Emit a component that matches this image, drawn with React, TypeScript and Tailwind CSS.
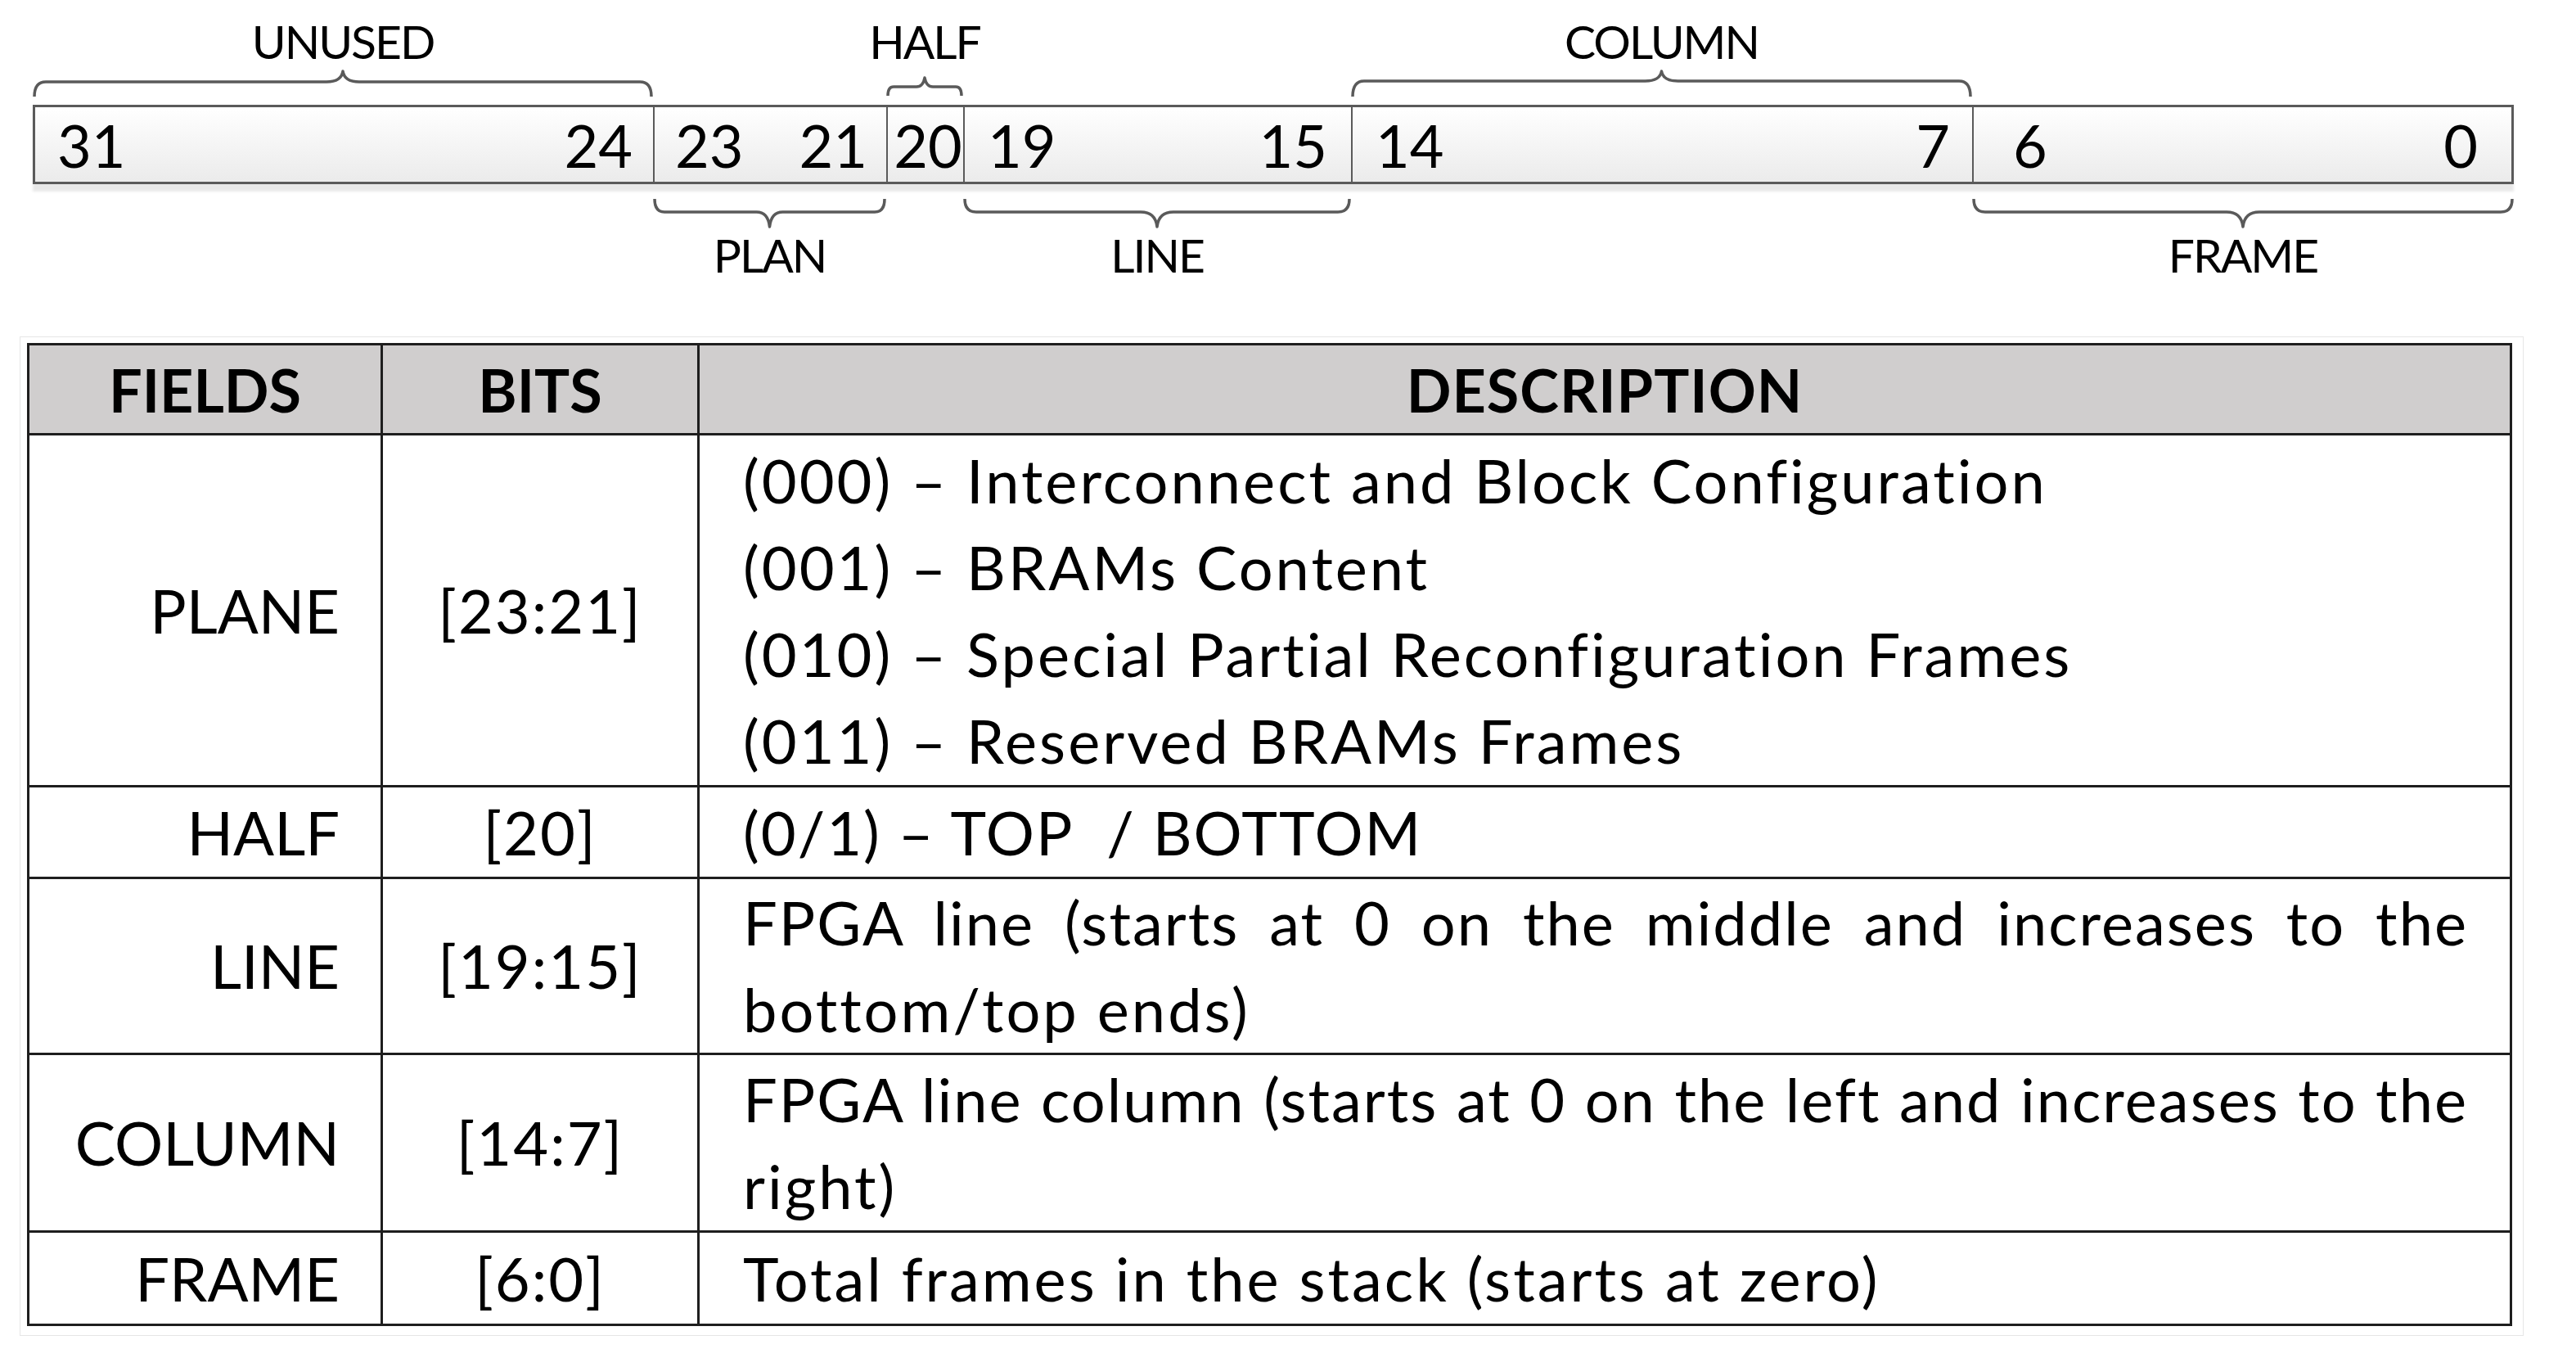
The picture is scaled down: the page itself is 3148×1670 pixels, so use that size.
import React from 'react';

const SEGS = [
  { w: 758, hi: '31', lo: '24', pl: 'pl-[27px]', pr: 'pr-[25px]' },
  { w: 285, hi: '23', lo: '21', pl: 'pl-[25px]', pr: 'pr-[23px]' },
  { w: 94, hi: '20', lo: '', pl: 'pl-[6px]', pr: 'pr-0' },
  { w: 474, hi: '19', lo: '15', pl: 'pl-[28px]', pr: 'pr-[29px]' },
  { w: 759, hi: '14', lo: '7', pl: 'pl-[28px]', pr: 'pr-[27px]' },
  { w: 662, hi: '6', lo: '0', pl: 'pl-[48px]', pr: 'pr-[41px]' },
];

const cols = 'grid grid-cols-[758px_285px_94px_474px_759px_662px]';

type BraceProps = { w: number; h: number; end: number; mid: number; tip: number; r?: number; rt?: number };

const Brace = ({ w, h, end, mid, tip, r = 16, rt = 20 }: BraceProps) => {
  const c = w / 2;
  const d = `M2 ${end} Q2 ${mid} ${r} ${mid} L${c - rt} ${mid} Q${c - 2} ${mid} ${c} ${tip} Q${c + 2} ${mid} ${c + rt} ${mid} L${w - r} ${mid} Q${w - 2} ${mid} ${w - 2} ${end}`;
  return (
    <svg width={w} height={h} viewBox={`0 0 ${w} ${h}`} className="block overflow-visible">
      <path d={d} fill="none" stroke="#5a5a5a" strokeWidth="3.5" strokeLinejoin="round" />
    </svg>
  );
};

const Label = ({ children }: { children?: React.ReactNode }) => (
  <div className="flex justify-center whitespace-nowrap text-[57px] leading-[57px] tracking-[-2px] text-black">{children}</div>
);

const Register = () => {
  return (
    <div className="pl-[40px]">
      <div className={`${cols} h-[85px] pt-[22px]`}>
        <Label>UNUSED</Label>
        <div />
        <Label>HALF</Label>
        <div />
        <Label>COLUMN</Label>
        <div />
      </div>
      <div className={`${cols} h-[35px]`}>
        <Brace w={758} h={35} end={33} mid={15} tip={2} />
        <div />
        <Brace w={94} h={35} end={32} mid={21} tip={10} r={9} rt={10} />
        <div />
        <Brace w={759} h={35} end={33} mid={14} tip={2} />
        <div />
      </div>
      <div className="mt-[8px] flex h-[97px] w-[3032px] border-[3px] border-[#5a5a5a] bg-gradient-to-b from-white to-[#ebebeb] shadow-[0_9px_3px_rgba(0,0,0,0.09)]">
        {SEGS.map((s, i) => (
          <div
            key={i}
            className={`flex h-full items-center text-[72px] leading-none text-black ${i > 0 ? 'border-l-2 border-[#5a5a5a]' : ''} ${s.lo ? 'justify-between' : 'justify-center'} ${s.pl} ${s.pr}`}
            style={{ width: i === 0 ? s.w - 3 : i === SEGS.length - 1 ? s.w - 3 : s.w }}
          >
            <span>{s.hi}</span>
            {s.lo && <span>{s.lo}</span>}
          </div>
        ))}
      </div>
      <div className={`${cols} mt-[15px] h-[40px]`}>
        <div />
        <Brace w={285} h={40} end={3} mid={19} tip={37} r={14} rt={16} />
        <div />
        <Brace w={474} h={40} end={3} mid={19} tip={37} />
        <div />
        <Brace w={662} h={40} end={3} mid={19} tip={37} />
      </div>
      <div className={`${cols} h-[60px] pt-[3px]`}>
        <div />
        <Label>PLAN</Label>
        <div />
        <Label>LINE</Label>
        <div />
        <Label>FRAME</Label>
      </div>
    </div>
  );
};

const c1 = 'flex items-center justify-end border-r-[3px] border-[#1e1e1e] pr-[50px]';
const c2 = 'flex items-center justify-center border-r-[3px] border-[#1e1e1e]';
const bits = `${c2} tracking-[2px]`;
const desc = 'flex min-w-0 flex-col justify-center pl-[53px] pr-[51px] leading-[106px]';
const c3 = `${desc} tracking-[3px]`;
const rowB = 'border-b-[3px]';
const head = 'flex items-center justify-center border-[#1e1e1e] bg-[#d0cece] font-bold text-[72px]';

// one table line stretched edge to edge, like Word's justified paragraph
const Spread = ({ children }: { children: React.ReactNode }) => (
  <div className="whitespace-nowrap text-justify tracking-[2px] [text-align-last:justify]">{children}</div>
);

const FieldsTable = () => {
  return (
    <div className="ml-[24px] mt-[71px] w-[3060px] border border-[#e6e6e6] pb-[11px] pl-[8px] pt-[7px]">
      <div className="grid w-[3037px] grid-cols-[432px_387px_minmax(0,1fr)] grid-rows-[110px_430px_112px_215px_217px_111px] border-[3px] border-[#1e1e1e] text-[74px] leading-none text-black">
        <div className={`${head} border-r-[3px] ${rowB}`}>FIELDS</div>
        <div className={`${head} border-r-[3px] ${rowB}`}>BITS</div>
        <div className={`${head} ${rowB} tracking-[1px]`}>DESCRIPTION</div>

        <div className={`${c1} ${rowB}`}>PLANE</div>
        <div className={`${bits} ${rowB}`}>[23:21]</div>
        <div className={`${c3} border-b-[3px] border-[#1e1e1e]`}>
          <div>(000) – Interconnect and Block Configuration</div>
          <div>(001) – BRAMs Content</div>
          <div>(010) – Special Partial Reconfiguration Frames</div>
          <div>(011) – Reserved BRAMs Frames</div>
        </div>

        <div className={`${c1} ${rowB}`}>HALF</div>
        <div className={`${bits} ${rowB}`}>[20]</div>
        <div className={`${desc} whitespace-pre border-b-[3px] border-[#1e1e1e] tracking-[2px]`}>(0/1) – TOP  / BOTTOM</div>

        <div className={`${c1} ${rowB}`}>LINE</div>
        <div className={`${bits} ${rowB}`}>[19:15]</div>
        <div className={`${c3} border-b-[3px] border-[#1e1e1e]`}>
          <Spread>FPGA line (starts at 0 on the middle and increases to the</Spread>
          <div>bottom/top ends)</div>
        </div>

        <div className={`${c1} ${rowB}`}>COLUMN</div>
        <div className={`${bits} ${rowB}`}>[14:7]</div>
        <div className={`${c3} border-b-[3px] border-[#1e1e1e]`}>
          <Spread>FPGA line column (starts at 0 on the left and increases to the</Spread>
          <div>right)</div>
        </div>

        <div className={c1}>FRAME</div>
        <div className={bits}>[6:0]</div>
        <div className={c3}>Total frames in the stack (starts at zero)</div>
      </div>
    </div>
  );
};

export default function App() {
  return (
    <div className="h-[1670px] w-[3148px] overflow-hidden bg-white font-['Lato',sans-serif] [font-variant-ligatures:none]">
      <Register />
      <FieldsTable />
    </div>
  );
}
